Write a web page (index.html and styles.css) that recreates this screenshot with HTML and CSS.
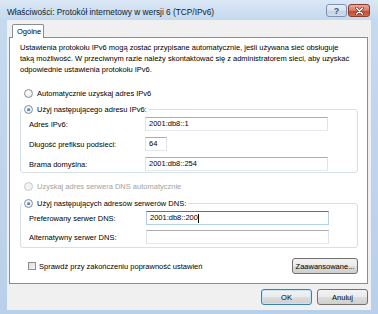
FILE: index.html
```html
<!DOCTYPE html>
<html lang="pl">
<head>
    <meta charset="UTF-8">
    <title>Właściwości: Protokół internetowy w wersji 6 (TCP/IPv6)</title>
    <link rel="stylesheet" href="styles.css">
</head>
<body>
    <div class="window">
        <div class="titlebar">
            <span class="title">Właściwości: Protokół internetowy w wersji 6 (TCP/IPv6)</span>
            <div class="caption-buttons">
                <div class="cap help">?</div>
                <div class="cap close">
                    <svg width="9" height="8" viewBox="0 0 9 8">
                        <path d="M1.5 1 L7.5 7 M7.5 1 L1.5 7" stroke="#6b1d14" stroke-width="2.6" stroke-linecap="round"/>
                        <path d="M1.5 1 L7.5 7 M7.5 1 L1.5 7" stroke="#fff" stroke-width="1.5" stroke-linecap="round"/>
                    </svg>
                </div>
            </div>
        </div>

        <div class="client">
            <div class="tabs">
                <div class="tab">Ogólne</div>
            </div>

            <div class="panel">
                <p class="intro">Ustawienia protokołu IPv6 mogą zostać przypisane automatycznie, jeśli używana sieć obsługuje<br>taką możliwość. W przeciwnym razie należy skontaktować się z administratorem sieci, aby uzyskać<br>odpowiednie ustawienia protokołu IPv6.</p>

                <div class="option first">
                    <span class="radio"></span>Automatycznie uzyskaj adres IPv6
                </div>

                <fieldset class="group group-ip">
                    <legend><span class="radio checked"></span>Użyj następującego adresu IPv6:</legend>
                    <div class="field">
                        <span class="label">Adres IPv6:</span>
                        <span class="input">2001:db8::1</span>
                    </div>
                    <div class="field">
                        <span class="label">Długość prefiksu podsieci:</span>
                        <span class="input short">64</span>
                    </div>
                    <div class="field">
                        <span class="label">Brama domyślna:</span>
                        <span class="input">2001:db8::254</span>
                    </div>
                </fieldset>

                <div class="option disabled">
                    <span class="radio"></span>Uzyskaj adres serwera DNS automatycznie
                </div>

                <fieldset class="group group-dns">
                    <legend><span class="radio checked"></span>Użyj następujących adresów serwerów DNS:</legend>
                    <div class="field">
                        <span class="label">Preferowany serwer DNS:</span>
                        <span class="input focused">2001:db8::200<span class="caret"></span></span>
                    </div>
                    <div class="field">
                        <span class="label">Alternatywny serwer DNS:</span>
                        <span class="input"></span>
                    </div>
                </fieldset>

                <div class="validate-row">
                    <span class="checkbox"></span>
                    <span class="validate-text">Sprawdź przy zakończeniu poprawność ustawień</span>
                    <div class="btn advanced">Zaawansowane...</div>
                </div>
            </div>

            <div class="dialog-buttons">
                <div class="btn default">OK</div>
                <div class="btn">Anuluj</div>
            </div>
        </div>
    </div>
</body>
</html>
```

FILE: styles.css
```css
body {
    margin: 0;
    font-family: "Liberation Sans", Arial, sans-serif;
    font-size: 7.5px;
    color: #000;
    background: #fff;
}
.window {
    width: 378px;
    height: 314px;
    box-sizing: border-box;
    padding: 0 7px 4px 7px;
    display: flex;
    flex-direction: column;
    background: linear-gradient(180deg, #dae7f5 0, #c5d9ef 20px, #b9d0ea 100%);
}

/* Title bar */
.titlebar {
    height: 20px;
    display: flex;
    align-items: flex-start;
}
.title {
    margin-top: 7px;
    font-size: 8.3px;
    color: #0d1a2b;
}
.caption-buttons {
    margin-left: auto;
    margin-right: 1px;
    margin-top: 4px;
    display: flex;
    gap: 1px;
}
.cap {
    height: 13px;
    box-sizing: border-box;
    border: 1px solid #7f93ae;
    border-radius: 3px;
    display: flex;
    align-items: center;
    justify-content: center;
}
.cap.help {
    width: 21px;
    background: linear-gradient(180deg, #e8eef6 0, #d6e1ee 50%, #c3d2e4 51%, #cfdceb 100%);
    color: #3f5575;
    font-weight: bold;
    font-size: 9px;
}
.cap.close {
    width: 22px;
    border-color: #8b3b30;
    background: linear-gradient(180deg, #e9a99b 0, #d97a66 50%, #c5442c 51%, #d66a4e 100%);
}

/* Client area */
.client {
    flex: 1;
    background: #f0f0f0;
    padding: 4px 3px 0 2px;
    display: flex;
    flex-direction: column;
}
.tabs {
    display: flex;
    padding-left: 3px;
    position: relative;
    z-index: 1;
}
.tab {
    height: 14px;
    padding: 0 4px;
    box-sizing: border-box;
    border: 1px solid #898c95;
    border-bottom: none;
    border-radius: 2px 2px 0 0;
    background: #fff;
    line-height: 13px;
    margin-bottom: -1px;
    width: 32px;
}
.panel {
    height: 247px;
    box-sizing: border-box;
    border: 1px solid #898c95;
    background: #fff;
    padding: 4px 9px 0 10px;
}
.intro {
    margin: 0;
    line-height: 11px;
}

/* Radios and checkboxes */
.option {
    height: 12px;
    display: flex;
    align-items: center;
    padding-left: 4px;
}
.option.first {
    margin-top: 12px;
}
.option.disabled {
    margin-top: 7px;
    color: #a2a2a2;
}
.radio {
    width: 9px;
    height: 9px;
    box-sizing: border-box;
    border: 1px solid #8b8f96;
    border-radius: 50%;
    background: radial-gradient(circle at 40% 35%, #ffffff 0, #eceef0 60%, #d6d9de 100%);
    margin-right: 4px;
    flex: none;
    position: relative;
}
.radio.checked::after {
    content: "";
    position: absolute;
    left: 2px;
    top: 2px;
    width: 3px;
    height: 3px;
    border-radius: 50%;
    background: radial-gradient(circle at 35% 35%, #7cc0f0 0, #1f5a94 70%);
}
.option.disabled .radio {
    border-color: #c4c6ca;
    background: #f4f4f4;
}
.checkbox {
    width: 8px;
    height: 8px;
    box-sizing: border-box;
    border: 1px solid #8e8f8f;
    background: linear-gradient(135deg, #dcdcdc 0, #f6f6f6 100%);
    margin-left: 8px;
    margin-right: 3px;
    flex: none;
}

/* Group boxes */
.group {
    margin: 4px 0 0 0;
    padding: 0 0 1px 0;
    border: 1px solid #d5dfe5;
    border-radius: 3px;
    min-width: 0;
}
.group-dns {
    margin-top: 5px;
    padding-bottom: 3px;
}
.group legend {
    margin-left: 1px;
    padding: 0 2px;
    height: 12px;
    display: flex;
    align-items: center;
}
.field {
    display: flex;
    align-items: center;
    height: 14px;
    margin-top: 6px;
    padding-left: 8px;
}
.group .field:first-of-type {
    margin-top: 2px;
}
.group-dns .field {
    margin-top: 5px;
}
.label {
    width: 116px;
    flex: none;
}
.group-dns .label {
    width: 117px;
}
.input {
    width: 183px;
    height: 14px;
    box-sizing: border-box;
    border: 1px solid #e2e3ea;
    border-top-color: #abadb3;
    border-bottom-color: #e3e9ef;
    padding-left: 3px;
    line-height: 12px;
    display: flex;
    align-items: center;
}
.input.short {
    width: 22px;
}
.input.focused {
    border-color: #b5cfe7;
    border-top-color: #3d7bad;
}
.caret {
    width: 1px;
    height: 9px;
    background: #000;
}

/* Buttons */
.btn {
    height: 16px;
    box-sizing: border-box;
    border: 1px solid #707070;
    border-radius: 3px;
    background: linear-gradient(180deg, #f2f2f2 0, #ebebeb 50%, #dddddd 51%, #cfcfcf 100%);
    display: flex;
    align-items: center;
    justify-content: center;
}
.validate-row {
    display: flex;
    align-items: center;
    margin-top: 10px;
    height: 16px;
}
.validate-text {
    flex: 1;
}
.btn.advanced {
    width: 66px;
}
.dialog-buttons {
    display: flex;
    justify-content: flex-end;
    gap: 5px;
    margin-top: 5px;
}
.dialog-buttons .btn {
    width: 51px;
}
.btn.default {
    border-color: #3c7fb1;
    box-shadow: inset 0 0 0 1px #c4e5f6;
}
```
